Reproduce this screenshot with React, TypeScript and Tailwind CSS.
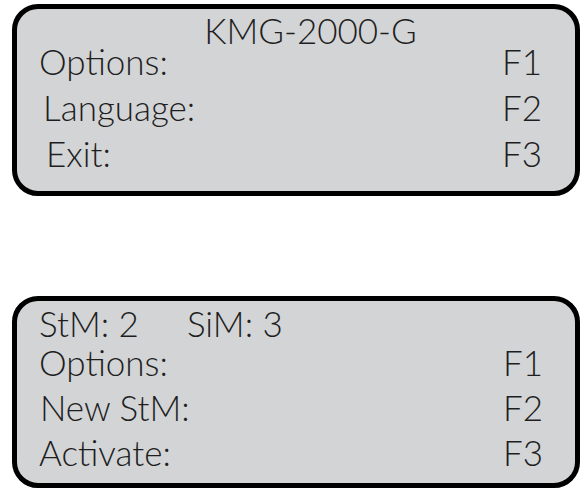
const font = { fontFamily: "Lato, 'DejaVu Sans', sans-serif" };

type Row = { label: string; key: string; indent?: string };

function Panel({
  title,
  rows,
  titleClass,
  rowClass,
}: {
  title: React.ReactNode;
  rows: Row[];
  titleClass: string;
  rowClass: string;
}) {
  return (
    <div className="h-[192px] w-[568px] rounded-[26px] border-[5px] border-black bg-[#d3d4d6] text-[#1e1e1e] font-light">
      <div className={titleClass}>{title}</div>
      {rows.map((r) => (
        <div key={r.label} className={rowClass}>
          <span className={r.indent ?? "pl-[22px]"}>{r.label}</span>
          <span>{r.key}</span>
        </div>
      ))}
    </div>
  );
}

export default function App() {
  return (
    <div className="flex min-h-[490px] w-[588px] flex-col gap-[100px] bg-white pl-[12px] pt-[4px]" style={font}>
      <Panel
        titleClass="flex h-[29px] items-center justify-center pl-[29px] pt-[13px] text-[35px] leading-none"
        rowClass="flex h-[46px] items-center justify-between pr-[33px] text-[35px] leading-none"
        title="KMG-2000-G"
        rows={[
          { label: "Options:", key: "F1" },
          { label: "Language:", key: "F2", indent: "pl-[26px]" },
          { label: "Exit:", key: "F3", indent: "pl-[29px]" },
        ]}
      />
      <Panel
        titleClass="flex h-[39px] items-center gap-[48px] pl-[22px] pt-[5px] text-[35px] leading-none"
        rowClass="flex h-[45px] items-center justify-between pr-[32px] text-[35px] leading-none"
        title={
          <>
            <span>StM: 2</span>
            <span>SiM: 3</span>
          </>
        }
        rows={[
          { label: "Options:", key: "F1" },
          { label: "New StM:", key: "F2", indent: "pl-[23px]" },
          { label: "Activate:", key: "F3" },
        ]}
      />
    </div>
  );
}
